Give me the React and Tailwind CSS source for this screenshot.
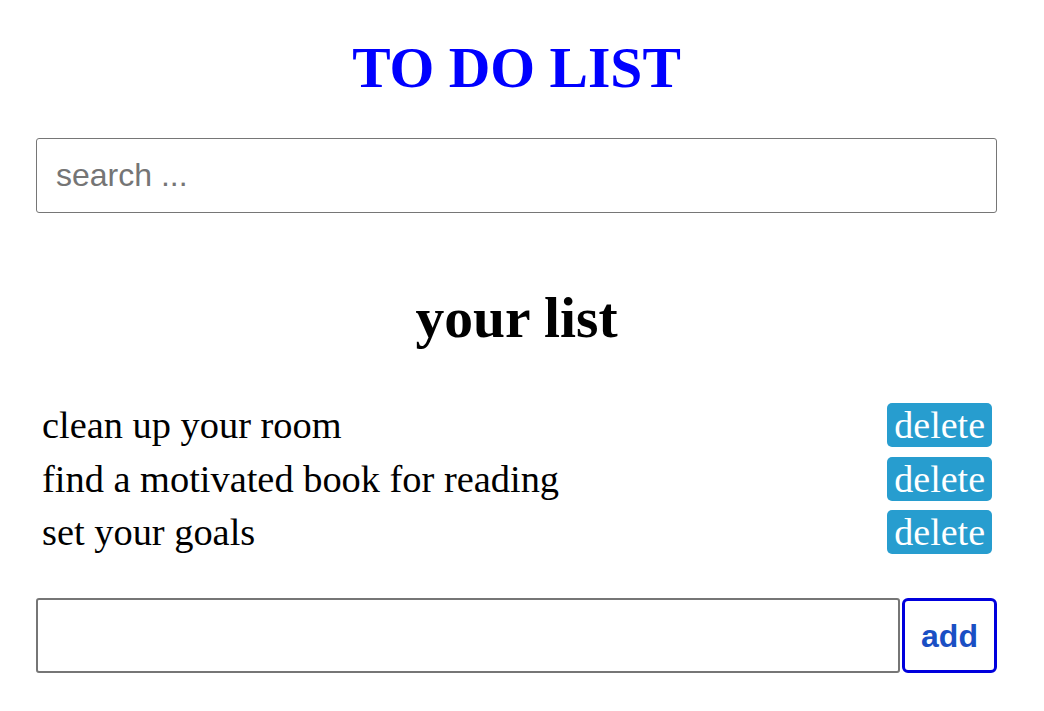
import React, { useState } from 'react';

const initialTodos = [
  'clean up your room',
  'find a motivated book for reading',
  'set your goals',
];

const App = () => {
  const [todos, setTodos] = useState(initialTodos);
  const [search, setSearch] = useState('');
  const [newTodo, setNewTodo] = useState('');

  const handleAdd = (e) => {
    e.preventDefault();
    if (!newTodo.trim()) return;
    setTodos([...todos, newTodo.trim()]);
    setNewTodo('');
  };

  const visible = todos.filter((t) => t.toLowerCase().includes(search.toLowerCase()));

  return (
    <div className="min-h-screen bg-white font-['Liberation_Serif',serif] text-black">
      <div className="ml-[36px] w-[961px] pt-[36px]">
        <h1 className="text-center text-[57.6px] leading-[64px] font-bold text-[#0000ff]">TO DO LIST</h1>

        <input
          type="text"
          placeholder="search ..."
          className="mt-[38px] block h-[75px] w-full rounded-[3px] border border-[#767676] px-[19px] font-['Liberation_Sans',sans-serif] text-[32px] placeholder:text-[#757575] focus:outline-none"
          value={search}
          onChange={(e) => setSearch(e.target.value)}
        />

        <h2 className="mt-[73px] text-center text-[57.6px] leading-[64px] font-bold">your list</h2>

        <ul className="mt-[53px] flex flex-col gap-[9.5px] pl-[6px] pr-[5px]">
          {visible.map((todo, i) => (
            <li key={i} className="flex items-center justify-between">
              <span className="text-[38.4px] leading-[44px]">{todo}</span>
              <button
                className="h-[44px] rounded-[5px] bg-[#279dcf] px-[7px] text-[38px] leading-[44px] text-white"
                onClick={() => setTodos(todos.filter((t) => t !== todo))}
              >
                delete
              </button>
            </li>
          ))}
        </ul>

        <form onSubmit={handleAdd} className="mt-[44px] flex gap-[2px]">
          <input
            type="text"
            className="h-[75px] flex-1 rounded-[3px] border-2 border-[#767676] px-[10px] font-['Liberation_Sans',sans-serif] text-[32px] focus:outline-none"
            value={newTodo}
            onChange={(e) => setNewTodo(e.target.value)}
          />
          <button
            type="submit"
            className="h-[75px] w-[95px] rounded-[6px] border-[3px] border-[#0000dd] bg-white font-['Liberation_Sans',sans-serif] text-[32px] font-bold text-[#1a4fc4]"
          >
            add
          </button>
        </form>
      </div>
    </div>
  );
};

export default App;
